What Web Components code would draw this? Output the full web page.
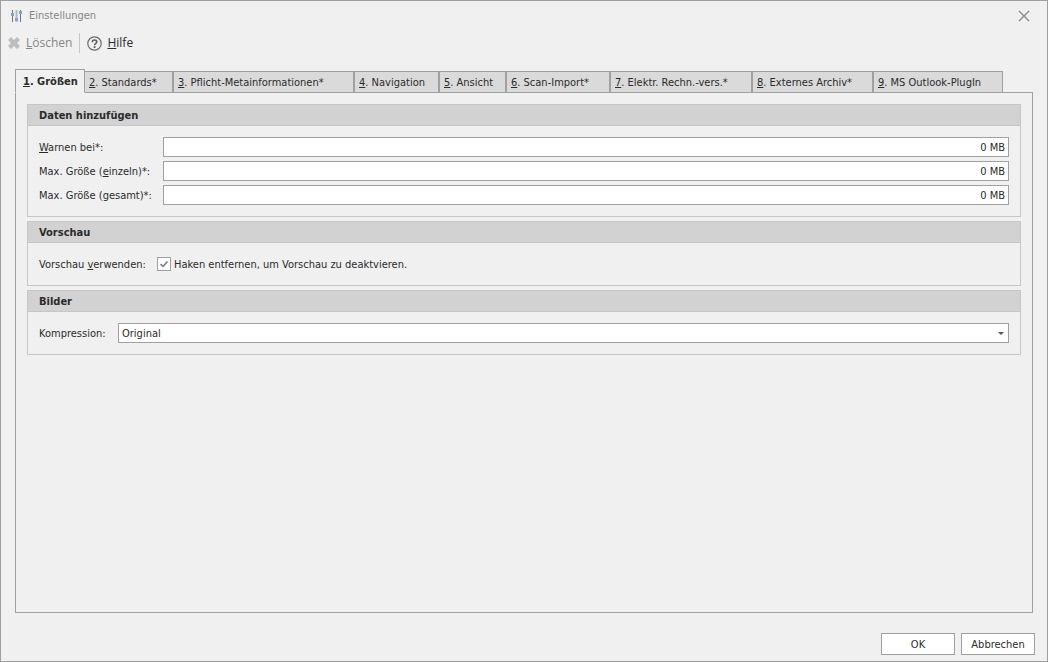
<!DOCTYPE html>
<html lang="de">
<head>
<meta charset="utf-8">
<meta name="viewport" content="width=device-width, initial-scale=1">
<title>Einstellungen</title>
<style>
    html, body {
        margin: 0;
    }
    body {
        --bg: #f0f0f0;
        --line: #a0a0a0;
        --line-soft: #c6c6c6;
        --text: #2b2b2b;
        --muted: #868686;
        --font-title: "Open Sans", "Noto Sans", sans-serif;
        font: 11px/14px "DejaVu Sans Condensed", "Noto Sans", sans-serif;
        color: var(--text);
        background: var(--bg);
    }
</style>
</head>
<body>

<app-window label="Einstellungen">
    <tool-button slot="toolbar" icon="delete" disabled><u>L</u>öschen</tool-button>
    <tool-button slot="toolbar" icon="help"><u>H</u>ilfe</tool-button>

    <tab-panel>
        <tab-item slot="tabs" selected style="--tab-width: 70px"><u>1</u>. Größen</tab-item>
        <tab-item slot="tabs" style="--tab-width: 89px"><u>2</u>. Standards*</tab-item>
        <tab-item slot="tabs" style="--tab-width: 181px"><u>3</u>. Pflicht-Metainformationen*</tab-item>
        <tab-item slot="tabs" style="--tab-width: 85px"><u>4</u>. Navigation</tab-item>
        <tab-item slot="tabs" style="--tab-width: 67px"><u>5</u>. Ansicht</tab-item>
        <tab-item slot="tabs" style="--tab-width: 104px"><u>6</u>. Scan-Import*</tab-item>
        <tab-item slot="tabs" style="--tab-width: 142px"><u>7</u>. Elektr. Rechn.-vers.*</tab-item>
        <tab-item slot="tabs" style="--tab-width: 121px"><u>8</u>. Externes Archiv*</tab-item>
        <tab-item slot="tabs" style="--tab-width: 130px"><u>9</u>. MS Outlook-PlugIn</tab-item>

        <group-box label="Daten hinzufügen" style="--label-width: 124px">
            <size-field value="0 MB"><u>W</u>arnen bei*:</size-field>
            <size-field value="0 MB">Max. Größe (<u>e</u>inzeln)*:</size-field>
            <size-field value="0 MB">Max. Größe (<u>g</u>esamt)*:</size-field>
        </group-box>
        <group-box label="Vorschau" style="--label-width: 118px">
            <check-field text="Haken entfernen, um Vorschau zu deaktvieren." checked>Vorschau <u>v</u>erwenden:</check-field>
        </group-box>
        <group-box label="Bilder" style="--label-width: 79px">
            <select-field options="Original">Kompression:</select-field>
        </group-box>
    </tab-panel>

    <dialog-button slot="footer">OK</dialog-button>
    <dialog-button slot="footer">Abbrechen</dialog-button>
</app-window>

<script>
const icons = {
    sliders: `
        <svg width="13" height="12" viewBox="0 0 13 12" aria-hidden="true">
            <path d="M2.500 0V12M10.500 0V12" stroke="#6f7680"/>
            <path d="M6.500 0V12" stroke="#b4b8be" stroke-width="2"/>
            <path d="M1 4.500H4M5 9.500H8M9 2.500H12" stroke="#7aa7d6" stroke-width="3"/>
        </svg>`,
    close: `
        <svg width="12" height="12" viewBox="0 0 12 12" aria-hidden="true">
            <path d="M1 1L11 11M11 1L1 11" stroke="#858585" stroke-width="1.200"/>
        </svg>`,
    delete: `
        <svg width="14" height="14" viewBox="0 0 14 14" aria-hidden="true">
            <path d="M4 1L7 4L10 1L13 4L10 7L13 10L10 13L7 10L4 13L1 10L4 7L1 4Z" fill="#bdbdbd"/>
        </svg>`,
    help: `
        <svg width="15" height="15" viewBox="0 0 15 15" fill="none" aria-hidden="true">
            <circle cx="7.500" cy="7.500" r="6.700" stroke="#6b6b70" stroke-width="1.200"/>
            <path d="M5.300 6.200C5.300 3.400 9.800 3.400 9.800 5.900C9.800 7.400 7.600 7.300 7.600 9.200" stroke="#5c5c62" stroke-width="1.600"/>
            <path d="M6.700 10.200H8.500V12H6.700Z" fill="#5c5c62"/>
        </svg>`
};

class AppWindow extends HTMLElement {
    constructor() {
        super();
        this.attachShadow({ mode: "open" });

        this.shadowRoot.innerHTML = `
            <style>
                :host {
                    display: flex;
                    flex-direction: column;
                    box-sizing: border-box;
                    min-height: 100vh;
                    border: 1px solid var(--line);
                    background: var(--bg);
                }
                header {
                    display: flex;
                    align-items: center;
                    gap: 6px;
                    height: 30px;
                    padding: 0 17px 0 9px;
                    color: var(--muted);
                }
                h1 {
                    flex: 1;
                    margin: 0;
                    font-size: 11px;
                    font-weight: normal;
                    line-height: 16px;
                }
                svg {
                    display: block;
                }
                .close {
                    padding: 0;
                    border: 0;
                    background: none;
                }
                .toolbar {
                    display: flex;
                    align-items: center;
                    height: 24px;
                    padding: 0 6px;
                }
                main {
                    display: flex;
                    flex: 1;
                    padding: 13px 14px 0;
                }
                ::slotted(tab-panel) {
                    flex: 1;
                }
                footer {
                    display: flex;
                    justify-content: flex-end;
                    gap: 6px;
                    padding: 20px 12px 6px;
                }
            </style>
            <header>
                ${icons.sliders}
                <h1>${this.getAttribute("label")}</h1>
                <button class="close" type="button" aria-label="Schließen">${icons.close}</button>
            </header>
            <div class="toolbar" role="toolbar"><slot name="toolbar"></slot></div>
            <main><slot></slot></main>
            <footer><slot name="footer"></slot></footer>
        `;
    }
}

class ToolButton extends HTMLElement {
    constructor() {
        super();
        this.attachShadow({ mode: "open" });

        this.shadowRoot.innerHTML = `
            <style>
                :host {
                    display: block;
                }
                :host(:not(:first-child)) {
                    margin-left: 7px;
                    padding-left: 7px;
                    border-left: 1px solid var(--line-soft);
                }
                button {
                    display: flex;
                    align-items: center;
                    gap: 5px;
                    height: 20px;
                    padding: 0;
                    border: 0;
                    background: none;
                    color: var(--text);
                    font: 12px/16px var(--font-title);
                }
                button:disabled {
                    color: var(--muted);
                }
            </style>
            <button type="button" ${this.hasAttribute("disabled") ? "disabled" : ""}>
                ${icons[this.getAttribute("icon")]}
                <span><slot></slot></span>
            </button>
        `;
    }
}

class TabPanel extends HTMLElement {
    constructor() {
        super();
        this.attachShadow({ mode: "open" });

        this.shadowRoot.innerHTML = `
            <style>
                :host {
                    display: flex;
                    flex-direction: column;
                    min-width: 0;
                }
                .tabs {
                    display: flex;
                    align-items: flex-end;
                    height: 25px;
                    margin-bottom: -1px;
                    z-index: 1;
                }
                .panel {
                    display: flex;
                    flex-direction: column;
                    flex: 1;
                    gap: 4px;
                    padding: 11px;
                    border: 1px solid var(--line);
                }
            </style>
            <div class="tabs" role="tablist"><slot name="tabs"></slot></div>
            <div class="panel" role="tabpanel"><slot></slot></div>
        `;
    }
}

class TabItem extends HTMLElement {
    constructor() {
        super();
        this.attachShadow({ mode: "open" });

        this.shadowRoot.innerHTML = `
            <style>
                :host {
                    display: block;
                    flex: 0 1 var(--tab-width);
                    min-width: 0;
                }
                button {
                    display: block;
                    box-sizing: border-box;
                    width: 100%;
                    height: 22px;
                    padding: 2px 4px 0;
                    border: 1px solid var(--line);
                    background: #dadada;
                    color: inherit;
                    font: inherit;
                    text-align: left;
                    white-space: nowrap;
                }
                /* the open tab is taller and covers the line of the panel */
                :host([selected]) {
                    z-index: 1;
                    margin-right: -1px;
                }
                :host([selected]) button {
                    height: 24px;
                    padding: 1px 7px 0;
                    border-bottom-color: var(--bg);
                    background: var(--bg);
                    font-weight: bold;
                }
            </style>
            <button type="button" role="tab" aria-selected="${this.hasAttribute("selected")}"><slot></slot></button>
        `;
    }
}

class GroupBox extends HTMLElement {
    constructor() {
        super();
        this.attachShadow({ mode: "open" });

        this.shadowRoot.innerHTML = `
            <style>
                :host {
                    display: block;
                    border: 1px solid var(--line-soft);
                }
                h2 {
                    margin: 0;
                    padding: 2px 11px 0;
                    border-bottom: 1px solid var(--line-soft);
                    background: #d2d2d2;
                    font-size: 11px;
                    line-height: 18px;
                }
                .body {
                    display: flex;
                    flex-direction: column;
                    gap: 4px;
                    padding: 11px;
                }
            </style>
            <h2>${this.getAttribute("label")}</h2>
            <div class="body"><slot></slot></div>
        `;
    }
}

// Shared by all rows that have a label on the left and a control on the right
const fieldStyle = `
    :host {
        display: grid;
        grid-template-columns: var(--label-width) 1fr;
        align-items: center;
        height: 20px;
    }
    label {
        white-space: nowrap;
    }
    .name {
        padding-top: 2px;
    }
    input, select {
        box-sizing: border-box;
        margin: 0;
        border: 1px solid var(--line);
        border-radius: 0;
        background: #fff;
        color: inherit;
        font: inherit;
        appearance: none;
    }
`;

class SizeField extends HTMLElement {
    constructor() {
        super();
        this.attachShadow({ mode: "open" });

        this.shadowRoot.innerHTML = `
            <style>
                ${fieldStyle}
                input {
                    width: 100%;
                    height: 20px;
                    padding: 0 3px;
                    text-align: right;
                }
            </style>
            <label class="name" for="field"><slot></slot></label>
            <input id="field" type="text" value="${this.getAttribute("value")}">
        `;
    }
}

class CheckField extends HTMLElement {
    constructor() {
        super();
        this.attachShadow({ mode: "open" });

        this.shadowRoot.innerHTML = `
            <style>
                ${fieldStyle}
                .check {
                    display: flex;
                    align-items: center;
                    gap: 3px;
                }
                input {
                    width: 14px;
                    height: 14px;
                }
                input:checked {
                    background: #fff url("data:image/svg+xml,%3Csvg xmlns='http://www.w3.org/2000/svg' viewBox='0 0 12 12'%3E%3Cpath d='M2.500 6L5 8.500L9.500 3.500' fill='none' stroke='%23777' stroke-width='1.500'/%3E%3C/svg%3E");
                }
            </style>
            <label class="name" for="field"><slot></slot></label>
            <div class="check">
                <input id="field" type="checkbox" ${this.hasAttribute("checked") ? "checked" : ""}>
                <label class="name" for="field">${this.getAttribute("text")}</label>
            </div>
        `;
    }
}

class SelectField extends HTMLElement {
    constructor() {
        super();
        this.attachShadow({ mode: "open" });

        const options = this.getAttribute("options").split(",");

        this.shadowRoot.innerHTML = `
            <style>
                ${fieldStyle}
                select {
                    width: 100%;
                    height: 20px;
                    padding: 2px 16px 0 3px;
                    background: #fff url("data:image/svg+xml,%3Csvg xmlns='http://www.w3.org/2000/svg' width='6' height='3' viewBox='0 0 6 3'%3E%3Cpath d='M0 0H6L3 3Z' fill='%23555'/%3E%3C/svg%3E") no-repeat right 4px center;
                }
            </style>
            <label class="name" for="field"><slot></slot></label>
            <select id="field">${options.map(option => `<option>${option}</option>`).join("")}</select>
        `;
    }
}

class DialogButton extends HTMLElement {
    constructor() {
        super();
        this.attachShadow({ mode: "open" });

        this.shadowRoot.innerHTML = `
            <style>
                :host {
                    display: block;
                }
                button {
                    display: block;
                    box-sizing: border-box;
                    min-width: 74px;
                    height: 22px;
                    padding: 2px 8px 0;
                    border: 1px solid var(--line);
                    background: #fff;
                    color: inherit;
                    font: inherit;
                }
            </style>
            <button type="button"><slot></slot></button>
        `;
    }
}

customElements.define("app-window", AppWindow);
customElements.define("tool-button", ToolButton);
customElements.define("tab-panel", TabPanel);
customElements.define("tab-item", TabItem);
customElements.define("group-box", GroupBox);
customElements.define("size-field", SizeField);
customElements.define("check-field", CheckField);
customElements.define("select-field", SelectField);
customElements.define("dialog-button", DialogButton);
</script>
</body>
</html>
